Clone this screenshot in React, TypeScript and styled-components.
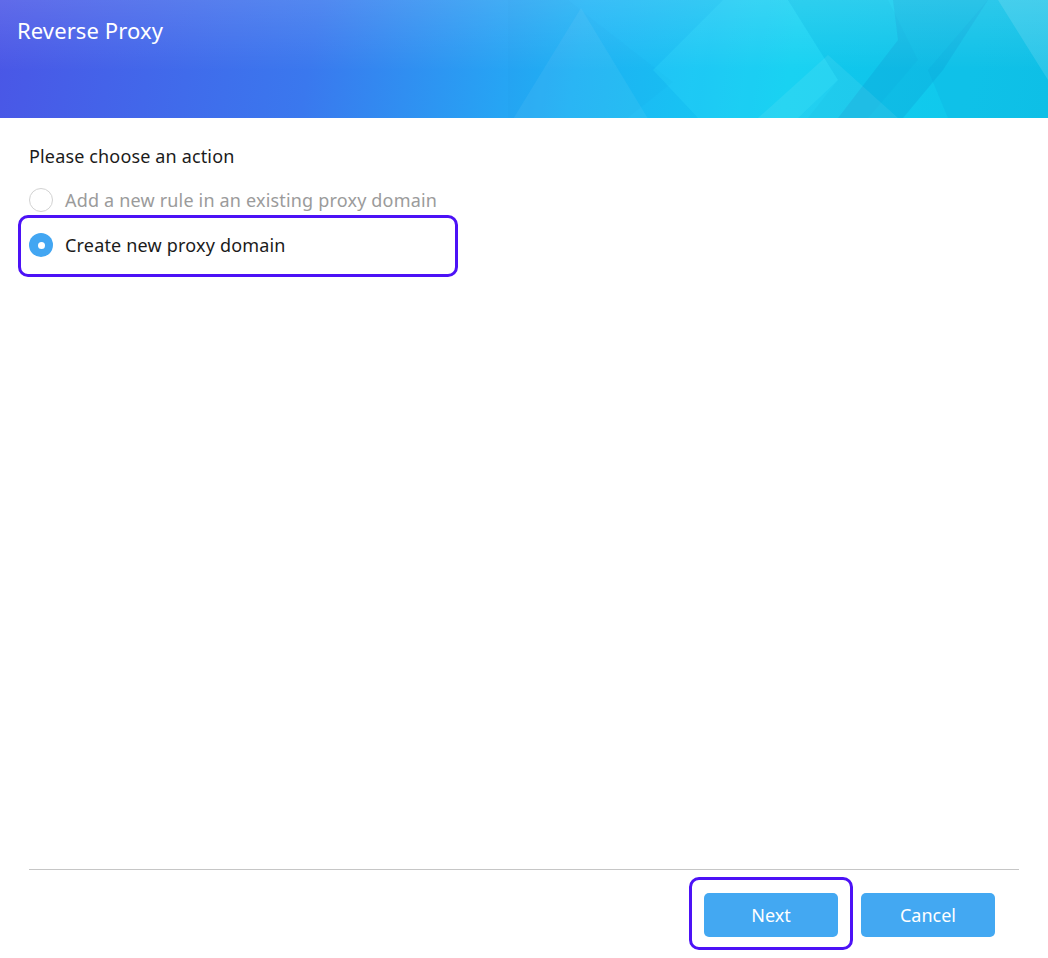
import styled, { createGlobalStyle } from "styled-components";
import { useState } from "react";

const GlobalStyle = createGlobalStyle`
  html, body {
    margin: 0;
    padding: 0;
    background: #ffffff;
  }
  body {
    font-family: "Noto Sans", "Open Sans", "Liberation Sans", sans-serif;
  }
  *, *::before, *::after {
    box-sizing: border-box;
  }
`;

const Window = styled.div`
  width: 100%;
  height: 100vh;
  display: flex;
  flex-direction: column;
  background-color: #ffffff;
`;

const Header = styled.header`
  position: relative;
  height: 118px;
  flex-shrink: 0;
  overflow: hidden;
  padding: 14px 17px;
  background: linear-gradient(100deg, #4a56e6 0%, #3a78ee 30%, #1fb4f6 55%, #12cdf0 75%, #0fc6ea 100%);
`;

const HeaderShade = styled.div`
  position: absolute;
  inset: 0;
  background: linear-gradient(180deg, rgba(255, 255, 255, 0.12) 0%, rgba(255, 255, 255, 0) 60%);
  pointer-events: none;
`;

const Pattern = styled.svg`
  position: absolute;
  top: 0;
  right: 0;
  width: 540px;
  height: 118px;
  pointer-events: none;
`;

const Title = styled.h1`
  position: relative;
  margin: 0;
  font-size: 22px;
  font-weight: 400;
  line-height: 32px;
  letter-spacing: 0.1px;
  color: #ffffff;
`;

const Body = styled.main`
  flex: 1;
  display: flex;
  flex-direction: column;
  padding: 26px 29px 0;
`;

const Prompt = styled.p`
  margin: 0 0 20px;
  font-size: 18px;
  line-height: 24px;
  letter-spacing: 0.15px;
  color: #1b1b1b;
`;

const Options = styled.div`
  display: flex;
  flex-direction: column;
  gap: 21px;
`;

const Option = styled.label<{ $disabled?: boolean; $highlight?: boolean }>`
  position: relative;
  display: flex;
  align-items: center;
  gap: 12px;
  height: 24px;
  font-size: 18px;
  letter-spacing: 0.18px;
  color: ${({ $disabled }) => ($disabled ? "#9b9b9b" : "#1b1b1b")};
  cursor: ${({ $disabled }) => ($disabled ? "default" : "pointer")};

  ${({ $highlight }) =>
    $highlight &&
    `
    &::after {
      content: "";
      position: absolute;
      left: -11px;
      top: -18px;
      width: 440px;
      height: 62px;
      border: 3px solid #4c12f6;
      border-radius: 10px;
      pointer-events: none;
    }
  `}
`;

const Radio = styled.span<{ $checked?: boolean }>`
  width: 24px;
  height: 24px;
  flex-shrink: 0;
  border-radius: 50%;
  display: flex;
  align-items: center;
  justify-content: center;
  background-color: ${({ $checked }) => ($checked ? "#42a6f2" : "#ffffff")};
  border: ${({ $checked }) => ($checked ? "none" : "1.5px solid #d2d2d2")};

  &::before {
    content: "";
    display: ${({ $checked }) => ($checked ? "block" : "none")};
    width: 7px;
    height: 7px;
    border-radius: 50%;
    background-color: #ffffff;
  }
`;

const Divider = styled.hr`
  margin: 0 29px;
  border: none;
  border-top: 1px solid #c6c6c6;
`;

const Footer = styled.footer`
  display: flex;
  justify-content: flex-end;
  gap: 23px;
  padding: 23px 53px 21px;
`;

const ButtonSlot = styled.div<{ $highlight?: boolean }>`
  position: relative;

  ${({ $highlight }) =>
    $highlight &&
    `
    &::after {
      content: "";
      position: absolute;
      left: -15px;
      right: -15px;
      top: -16px;
      bottom: -13px;
      border: 3px solid #4c12f6;
      border-radius: 10px;
      pointer-events: none;
    }
  `}
`;

const Button = styled.button`
  display: block;
  width: 134px;
  height: 44px;
  border: none;
  border-radius: 5px;
  background-color: #43a8f2;
  color: #ffffff;
  font-family: inherit;
  font-size: 18px;
  cursor: pointer;
`;

export default function App(): JSX.Element {
  const [choice] = useState("create");

  return (
    <Window>
      <GlobalStyle />
      <Header>
        <Pattern viewBox="0 0 540 118" preserveAspectRatio="none">
          <polygon points="73,8 -20,160 165,160" fill="#ffffff" opacity="0.06" />
          <polygon points="0,0 60,0 165,82 120,118 0,118" fill="#0a8fd8" opacity="0.05" />
          <polygon points="215,0 280,0 330,80 290,118 190,118 145,70" fill="#3fe8ff" opacity="0.18" />
          <polygon points="280,0 380,0 410,60 360,118 300,118 330,80" fill="#0aa6d8" opacity="0.12" />
          <polygon points="385,0 480,0 435,70 395,118 330,118 390,40" fill="#0a86c8" opacity="0.2" />
          <polygon points="320,55 390,118 250,118" fill="#ffffff" opacity="0.07" />
          <polygon points="480,0 540,0 540,118 440,118 420,70" fill="#0a9fd6" opacity="0.18" />
          <polygon points="490,0 540,80 540,0" fill="#ffffff" opacity="0.12" />
        </Pattern>
        <HeaderShade />
        <Title>Reverse Proxy</Title>
      </Header>
      <Body>
        <Prompt>Please choose an action</Prompt>
        <Options>
          <Option $disabled>
            <Radio $checked={false} />
            Add a new rule in an existing proxy domain
          </Option>
          <Option $highlight>
            <Radio $checked={choice === "create"} />
            Create new proxy domain
          </Option>
        </Options>
      </Body>
      <Divider />
      <Footer>
        <ButtonSlot $highlight>
          <Button>Next</Button>
        </ButtonSlot>
        <ButtonSlot>
          <Button>Cancel</Button>
        </ButtonSlot>
      </Footer>
    </Window>
  );
}
